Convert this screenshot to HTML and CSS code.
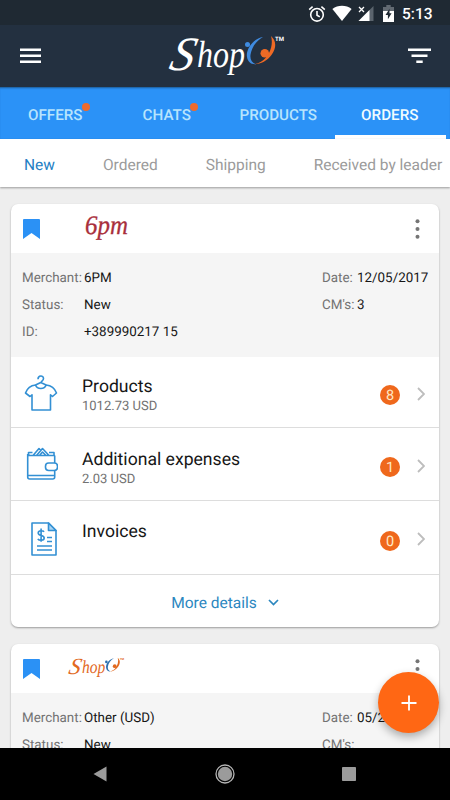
FILE: index.html
```html
<!DOCTYPE html>
<html lang="en">
<head>
    <meta charset="UTF-8">
    <meta name="viewport" content="width=device-width, initial-scale=1.0">
    <title>ShopO - Orders</title>
    <link rel="stylesheet" href="styles.css">
</head>
<body>
    <div class="phone">
        <div class="status-bar">
            <svg width="18" height="18" viewBox="0 0 18 18" fill="none" stroke="#fff" stroke-width="1.6">
                <circle cx="9" cy="9.8" r="6.3"/>
                <path d="M9 6v4.2l2.8 1.7M1.2 4.6l3.4-2.9M16.8 4.6l-3.4-2.9"/>
            </svg>
            <svg class="status-wifi" width="20" height="17" viewBox="0 0 20 17" fill="#fff">
                <path d="M.4 3.9C5.8-.3 14.2-.3 19.6 3.9L10 16z"/>
            </svg>
            <svg class="status-signal" width="16" height="17" viewBox="0 0 16 17">
                <path d="M.5 16L15.5 1v15z" fill="#5b646d"/>
                <path d="M.5 16L11.5 5v11z" fill="#fff"/>
                <path d="M1 2l5 5M6 2L1 7" stroke="#fff" stroke-width="1.3"/>
            </svg>
            <svg class="status-battery" width="11" height="17" viewBox="0 0 11 17">
                <path d="M3.3 0h4.4v2H11v4H0V2h3.3z" fill="#626a72"/>
                <path d="M0 6h11v11H0z" fill="#fff"/>
                <path d="M6.5 3.7L2.5 10h2.4v4.300L8.600 8.300H6.500z" fill="#1f2933"/>
            </svg>
            <span class="clock">5:13</span>
        </div>

        <header class="app-bar">
            <svg width="21" height="16" viewBox="0 0 21 16" fill="#fff">
                <path d="M0 .5h21v2.600H0zM0 6.500h21v2.600H0zM0 12.500h21v2.600H0z"/>
            </svg>
            <svg class="logo" width="122" height="44" viewBox="0 0 122 44">
                <text x="4" y="37" class="logo-initial" textLength="24" lengthAdjust="spacingAndGlyphs" transform="translate(9 0) skewX(-14)">S</text>
                <text x="33" y="34" class="logo-text" textLength="48" lengthAdjust="spacingAndGlyphs">hop</text>
                <g transform="translate(3 1)">
                    <path d="M96 3C87 4 78.500 15 80 23c.8 5 4 7.600 9 7.200-4.500-1.700-6.200-5.200-5.400-10C84.800 13 89.500 6.500 96 3z" fill="#3f8be0"/>
                    <circle cx="80.500" cy="10.500" r="2.500" fill="#3f8be0"/>
                    <path d="M104 2c5.500 5 5.600 12 .8 18.500-4.500 6.300-10.800 9.700-17.300 9.700 5-1.200 8.600-3.500 11-6.300 5.500-6.200 7.700-14.500 5.500-21.900z" fill="#ef6a25"/>
                    <circle cx="97.800" cy="19.300" r="4.300" fill="#ef6a25"/>
                </g>
                <text x="111" y="7.500" class="logo-tm">TM</text>
            </svg>
            <svg width="23" height="16" viewBox="0 0 23 16" fill="#fff">
                <path d="M0 .5h23v2.600H0zM3.500 6.500h16v2.600h-16zM8.300 12.500h6.400v2.600H8.300z"/>
            </svg>
        </header>

        <nav class="tabs">
            <a class="tab"><span class="tab-label">OFFERS<i class="dot"></i></span></a>
            <a class="tab"><span class="tab-label">CHATS<i class="dot"></i></span></a>
            <a class="tab">PRODUCTS</a>
            <a class="tab active">ORDERS</a>
        </nav>

        <nav class="subtabs">
            <a class="subtab active">New</a>
            <a class="subtab">Ordered</a>
            <a class="subtab">Shipping</a>
            <a class="subtab">Received by leader</a>
        </nav>

        <main class="orders">
            <section class="card">
                <div class="card-header">
                    <svg class="bookmark" width="17" height="20" viewBox="0 0 17 20"><path d="M0 1Q0 0 1 0h15Q17 0 17 1v19l-8.500-6L0 20z" fill="#2b91f5"/></svg>
                    <svg class="brand-6pm" width="46" height="36" viewBox="0 0 46 36">
                        <text x="1" y="23" textLength="43" lengthAdjust="spacingAndGlyphs">6pm</text>
                    </svg>
                    <svg class="more" width="5" height="20" viewBox="0 0 5 20" fill="#757575"><circle cx="2.500" cy="2.300" r="2"/><circle cx="2.500" cy="10" r="2"/><circle cx="2.500" cy="17.700" r="2"/></svg>
                </div>
                <div class="info">
                    <dl class="info-left">
                        <dt>Merchant:</dt><dd>6PM</dd>
                        <dt>Status:</dt><dd>New</dd>
                        <dt>ID:</dt><dd>+389990217 15</dd>
                    </dl>
                    <dl class="info-right">
                        <dt>Date:</dt><dd>12/05/2017</dd>
                        <dt>CM's:</dt><dd>3</dd>
                    </dl>
                </div>
                <div class="row">
                    <svg class="row-icon" width="34" height="38" viewBox="0 0 34 38">
                        <path d="M14 5.200c0-4 5.500-4.100 5.500-.8 0 2.600-2.700 2.200-2.700 5.100M11.500 11l5.300-2.500 5.300 2.500"/>
                        <path d="M11.500 11C6.500 11.500 3.500 13.500 1.500 19l4.500 3.500 2-1.700V36h18.500V20.800l2 1.700 4-3.500c-2-5.500-5-7.500-10.400-8-1.500 4.600-9 4.600-10.600 0z"/>
                    </svg>
                    <div class="row-text">
                        <h3>Products</h3>
                        <p>1012.73 USD</p>
                    </div>
                    <span class="badge">8</span>
                    <svg class="chevron" width="8" height="14" viewBox="0 0 8 14"><path d="M1 1l6 6-6 6"/></svg>
                </div>
                <div class="row row-expenses">
                    <svg class="row-icon" width="34" height="38" viewBox="0 0 34 38">
                        <path d="M5.500 9.500l-1.700-1.300M4.500 9.500v-3h4M4 9.500h27M3.700 8v23q0 2 2 2h23q2 0 2-2v-6.500M30.700 17V9.500M3.700 29.500h27M9 9.500l6-7 2 2.200M12.500 9.500l6-7 6.500 7M15.500 9.500l3-3.500 3.500 3.500M25 6.500h5v3"/>
                        <rect x="21.500" y="17" width="12" height="7.500" rx="3.200"/>
                    </svg>
                    <div class="row-text">
                        <h3>Additional expenses</h3>
                        <p>2.03 USD</p>
                    </div>
                    <span class="badge">1</span>
                    <svg class="chevron" width="8" height="14" viewBox="0 0 8 14"><path d="M1 1l6 6-6 6"/></svg>
                </div>
                <div class="row row-invoices">
                    <svg class="row-icon" width="34" height="38" viewBox="0 0 34 38">
                        <g transform="translate(2 0)">
                            <path d="M6 3h16.500l7.500 7.500V35H6z"/>
                            <path d="M22.500 3v7.500H30z" fill="#a9d4f3"/>
                            <path d="M18 11.800c-1-1.600-5.800-1.600-5.800 1.200 0 3.300 6 1.800 6 5 0 3-5.200 2.800-6.400.8M15.100 8.500v13.200M21 17.500h5M21 21.500h5M11 26h15M11 30h15"/>
                        </g>
                    </svg>
                    <div class="row-text">
                        <h3>Invoices</h3>
                    </div>
                    <span class="badge">0</span>
                    <svg class="chevron" width="8" height="14" viewBox="0 0 8 14"><path d="M1 1l6 6-6 6"/></svg>
                </div>
                <a class="more-details">
                    More details
                    <svg width="11" height="7" viewBox="0 0 11 7"><path d="M1 1l4.500 4.500L10 1"/></svg>
                </a>
            </section>

            <section class="card">
                <div class="card-header">
                    <svg class="bookmark" width="17" height="20" viewBox="0 0 17 20"><path d="M0 1Q0 0 1 0h15Q17 0 17 1v19l-8.500-6L0 20z" fill="#2b91f5"/></svg>
                    <svg class="brand-shopo" width="59" height="22" viewBox="0 0 122 44">
                        <g class="orange">
                            <text x="4" y="37" class="logo-initial" textLength="24" lengthAdjust="spacingAndGlyphs" transform="translate(9 0) skewX(-14)">S</text>
                            <text x="33" y="34" class="logo-text" textLength="48" lengthAdjust="spacingAndGlyphs">hop</text>
                            <text x="111" y="7.500" class="logo-tm">TM</text>
                        </g>
                        <g transform="translate(3 1)">
                            <path d="M96 3C87 4 78.500 15 80 23c.8 5 4 7.600 9 7.200-4.500-1.700-6.200-5.200-5.400-10C84.800 13 89.500 6.500 96 3z" fill="#2d6fb0"/>
                            <circle cx="80.500" cy="10.500" r="2.700" fill="#2d6fb0"/>
                            <path d="M104 2c5.500 5 5.600 12 .8 18.500-4.500 6.300-10.800 9.700-17.300 9.700 5-1.200 8.600-3.500 11-6.300 5.500-6.200 7.700-14.500 5.500-21.900z" fill="#e2691f"/>
                            <circle cx="97.800" cy="19.300" r="4" fill="#e2691f"/>
                        </g>
                    </svg>
                    <svg class="more" width="5" height="20" viewBox="0 0 5 20" fill="#757575"><circle cx="2.500" cy="2.300" r="2"/><circle cx="2.500" cy="10" r="2"/><circle cx="2.500" cy="17.700" r="2"/></svg>
                </div>
                <div class="info">
                    <dl class="info-left">
                        <dt>Merchant:</dt><dd>Other (USD)</dd>
                        <dt>Status:</dt><dd>New</dd>
                    </dl>
                    <dl class="info-right">
                        <dt>Date:</dt><dd>05/2</dd>
                        <dt>CM's:</dt><dd></dd>
                    </dl>
                </div>
            </section>
        </main>

        <button class="fab" aria-label="Add order">
            <svg width="16" height="16" viewBox="0 0 16 16"><path d="M8 .5v15M.5 8h15" stroke="#fff" stroke-width="1.8"/></svg>
        </button>

        <footer class="nav-bar">
            <svg width="14" height="16" viewBox="0 0 14 16"><path d="M13.500.5v15L.5 8z" fill="#9b9b9b"/></svg>
            <svg width="20" height="20" viewBox="0 0 20 20"><circle cx="10" cy="10" r="9" fill="none" stroke="#b5b5b5" stroke-width="1.300"/><circle cx="10" cy="10" r="7.200" fill="#9b9b9b"/></svg>
            <svg width="14" height="14" viewBox="0 0 14 14"><rect width="14" height="14" rx=".8" fill="#9b9b9b"/></svg>
        </footer>
    </div>
</body>
</html>
```

FILE: styles.css
```css
* { margin: 0; padding: 0; box-sizing: border-box; }
body {
    font-family: Roboto, "Liberation Sans", sans-serif;
    background: #eee;
    color: #161616;
    text-rendering: geometricPrecision;
}
svg {
    display: block;
    flex: none;
}
.phone {
    position: relative;
    display: flex;
    flex-direction: column;
    width: 450px;
    height: 800px;
    overflow: hidden;
    background: #eee;
}

/* status bar */
.status-bar {
    display: flex;
    align-items: center;
    justify-content: flex-end;
    flex: none;
    height: 25px;
    padding: 2px 18px 0 0;
    background: #1f2933;
}
.status-wifi { margin-left: 6px; }
.status-signal { margin-left: 6px; }
.status-battery { margin-left: 9px; }
.clock {
    width: 30px;
    margin-left: 8px;
    color: #fff;
    font-size: 15.5px;
    font-weight: 500;
    white-space: nowrap;
}

/* header */
.app-bar {
    display: flex;
    align-items: center;
    justify-content: space-between;
    flex: none;
    height: 62px;
    padding: 0 19px 0 20px;
    background: #233040;
    fill: #fff;
}
.logo {
    margin-top: -2px;
    overflow: visible;
}
.logo-initial,
.logo-text {
    font-family: "Liberation Serif", serif;
    font-size: 38px;
    font-style: italic;
}
.logo-initial { font-size: 48px; }
.logo-tm {
    font-size: 6px;
    font-weight: 700;
}
.orange { fill: #e2691f; }

/* tabs */
.tabs {
    display: flex;
    flex: none;
    height: 52px;
    padding-right: 4px;
    background: #2b92f7;
    box-shadow: inset 0 2px 2px -1px #1c5a94;
}
.tab {
    display: flex;
    flex: 1;
    align-items: center;
    justify-content: center;
    padding: 7px 1px 0 0;
    border-bottom: 4px solid transparent;
    color: #b8e4fd;
    font-size: 15.2px;
    font-weight: 500;
}
.tab.active {
    color: #f0fcff;
    border-bottom-color: #fff;
}
.tab-label { position: relative; }
.dot {
    position: absolute;
    top: -3px;
    right: -7px;
    width: 8px;
    height: 8px;
    border-radius: 50%;
    background: #ee6a2c;
}
.subtabs {
    display: flex;
    flex: none;
    align-items: center;
    gap: 48px;
    height: 48px;
    padding: 3px 0 0 24px;
    background: #fff;
    box-shadow: 0 1px 2px rgba(0, 0, 0, 0.35);
}
.subtab {
    color: #9b9b9b;
    font-size: 15.5px;
    white-space: nowrap;
}
.subtab.active { color: #2480c4; }

/* order cards */
.orders {
    flex: 1;
    min-height: 0;
    padding: 17px 11px 0;
    overflow: hidden;
}
.card {
    margin-bottom: 17px;
    border-radius: 7px;
    background: #fff;
    box-shadow: 0 1px 2px rgba(0, 0, 0, 0.35);
}
.card-header {
    display: flex;
    align-items: center;
    height: 49px;
    padding: 0 19px 0 12px;
}
.brand-6pm {
    margin-left: 44px;
    overflow: visible;
    font-family: "Liberation Serif", serif;
    font-size: 27px;
    font-style: italic;
    fill: #a92f3c;
    stroke: #a92f3c;
    stroke-width: 0.3;
}
.brand-shopo {
    margin: -3px 0 0 26px;
    overflow: visible;
}
.more { margin-left: auto; }
.info {
    display: flex;
    justify-content: space-between;
    height: 104px;
    padding: 12px 12px 0 11px;
    background: #f5f5f5;
    font-size: 13.4px;
}
.info-left,
.info-right {
    display: grid;
    grid-template-columns: 62px auto;
    grid-auto-rows: 27px;
    align-content: start;
    align-items: center;
    white-space: nowrap;
}
.info-right {
    grid-template-columns: 35px 70px;
}
.info dt { color: #727272; }
.row {
    display: flex;
    align-items: center;
    height: 71px;
    padding: 2px 14px 0 13px;
    border-bottom: 1px solid #ddd;
}
.row-expenses { height: 73px; }
.row-invoices { height: 74px; }
.row-icon {
    fill: none;
    stroke: #3390d4;
    stroke-width: 1.6;
    stroke-linejoin: round;
}
.row-text {
    flex: 1;
    height: 32px;
    margin-left: 24px;
}
.row-text h3 {
    font-size: 17.6px;
    font-weight: 400;
    line-height: 21px;
}
.row-text p {
    color: #727272;
    font-size: 13px;
    line-height: 18px;
}
.row-expenses .row-text { height: 30px; }
.row-invoices .row-text { height: 34px; }
.badge {
    width: 20px;
    height: 20px;
    margin: 4px 17px 0 0;
    border-radius: 50%;
    background: #ef681c;
    color: #ffe9c4;
    font-size: 14.5px;
    line-height: 21px;
    text-align: center;
}
.chevron {
    margin-top: 1px;
    fill: none;
    stroke: #bdbdbd;
    stroke-width: 1.8;
}
.more-details {
    display: flex;
    align-items: center;
    justify-content: center;
    gap: 11px;
    height: 52px;
    padding: 3px 0 0;
    color: #2c87bf;
    font-size: 15.5px;
}
.more-details svg {
    fill: none;
    stroke: #2c87bf;
    stroke-width: 1.7;
}

/* floating button sits over the second card */
.fab {
    position: absolute;
    right: 11px;
    bottom: 67px;
    display: flex;
    align-items: center;
    justify-content: center;
    width: 61px;
    height: 61px;
    border: none;
    border-radius: 50%;
    background: #ff6714;
    box-shadow: 0 4px 8px rgba(0, 0, 0, 0.3);
}

/* system navigation */
.nav-bar {
    display: flex;
    align-items: center;
    justify-content: space-between;
    flex: none;
    height: 52px;
    padding: 0 94px 0 93px;
    background: #000;
}
```
